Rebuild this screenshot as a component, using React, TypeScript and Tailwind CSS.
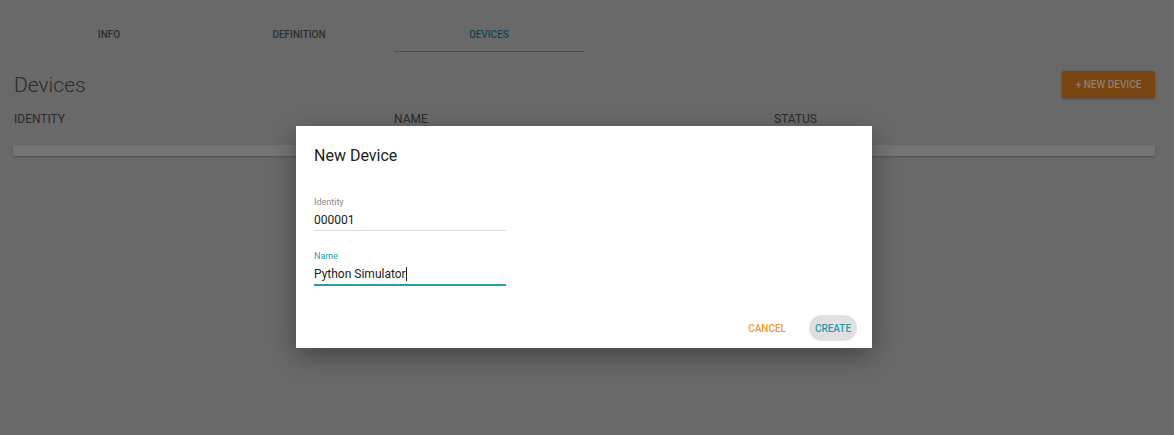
import React from "react";

export default function App() {
  return (
    <div
      className="relative w-[1174px] h-[435px] overflow-hidden bg-[#696969]"
      style={{ fontFamily: "Roboto, 'Liberation Sans', sans-serif" }}
    >
      <div className="px-[14px] pt-[24px]">
        <div className="flex">
          {["INFO", "DEFINITION", "DEVICES"].map((t, i) => (
            <div
              key={t}
              className={
                "w-[190px] h-[28px] flex items-start justify-center pt-[3px] text-[10px] font-medium " +
                (i === 2
                  ? "text-[#134652] border-b border-[#1f5d6b]"
                  : "text-[#2e2e2e]")
              }
            >
              {t}
            </div>
          ))}
        </div>
        <div className="flex items-center justify-between mt-[19px]">
          <div className="text-[21px] font-light text-[#2b2b2b] leading-none pt-[1px]">Devices</div>
          <div className="mr-[5px] w-[93px] h-[27px] rounded-[2px] bg-[#7a4511] shadow-[0_1px_3px_rgba(0,0,0,0.3)] flex items-center justify-center text-[10px] font-medium text-[#8c7e70]">
            + NEW DEVICE
          </div>
        </div>
        <div className="grid grid-cols-[380px_380px_1fr] mt-[15px] text-[12px] text-[#2b2b2b] leading-none">
          <div>IDENTITY</div>
          <div>NAME</div>
          <div>STATUS</div>
        </div>
        <div className="mt-[20px] mr-[5px] -ml-px h-[11px] rounded-[2px] bg-[#747474] shadow-[0_1px_2px_rgba(0,0,0,0.25)]" />
      </div>

      <div className="absolute left-[296px] top-[126px] w-[576px] h-[222px] bg-white shadow-[0_8px_24px_rgba(0,0,0,0.35)] flex flex-col">
        <div className="pl-[18px] pt-[21px] text-[16px] text-[#212121] leading-[18px]">New Device</div>
        <div className="pl-[18px] pt-[32px] w-[210px]">
          <div className="text-[9px] text-[#8a8a8a] leading-[10px]">Identity</div>
          <div className="mt-[6px] text-[12px] text-[#212121] leading-[14px] pb-[3px] border-b border-[#dedede]">000001</div>
          <div className="mt-[20px] text-[9px] text-[#2a9ab0] leading-[10px]">Name</div>
          <div className="mt-[6px] text-[12px] text-[#212121] leading-[14px] pb-[3px] border-b-2 border-[#2a9ab0] flex items-center">
            Python Simulator<span className="inline-block w-px h-[14px] bg-[#212121]" />
          </div>
        </div>
        <div className="mt-auto mb-[7px] mr-[15px] flex justify-end items-center gap-[23px]">
          <div className="text-[10px] font-medium text-[#f39a2b]">CANCEL</div>
          <div className="w-[48px] h-[26px] rounded-[13px] bg-[#e0e0e0] flex items-center justify-center text-[10px] font-medium text-[#2a9ab0]">
            CREATE
          </div>
        </div>
      </div>
    </div>
  );
}
